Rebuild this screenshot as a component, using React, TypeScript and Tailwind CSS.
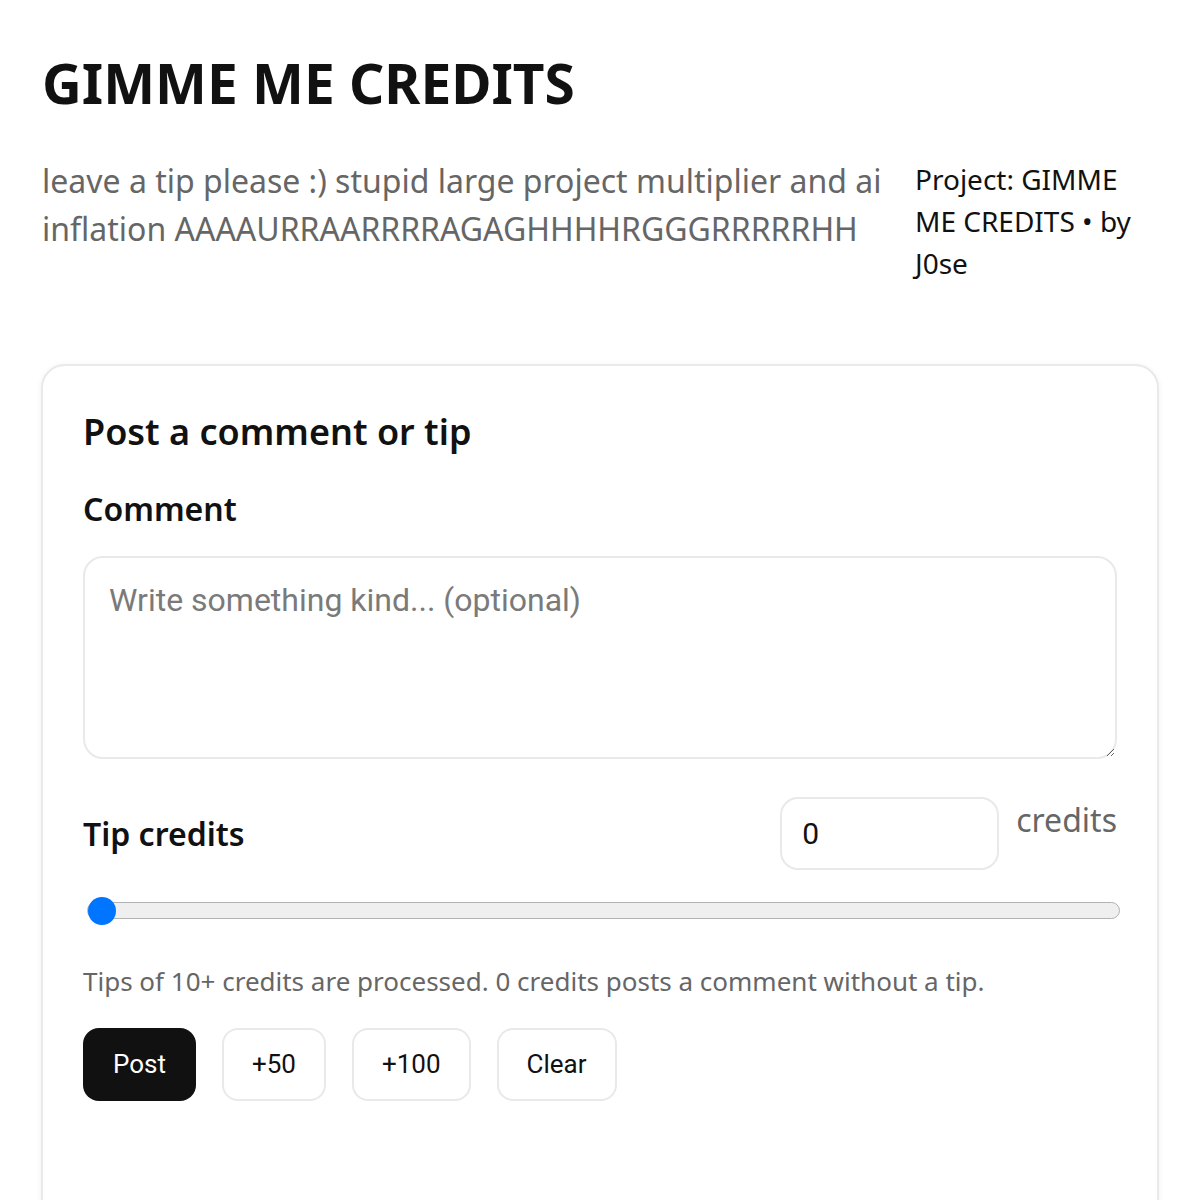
import { useState } from "react";

export default function App() {
  const [tip, setTip] = useState(0);
  const [comment, setComment] = useState("");

  return (
    <div className="min-h-screen bg-white px-[41px] pt-[55px] font-['Noto_Sans',sans-serif] text-[#111]">
      <h1 className="ml-[1px] text-[55px] font-bold leading-none">GIMME ME CREDITS</h1>

      {/* Intro */}
      <div className="mt-[47px] flex items-start justify-between gap-[30px]">
        <p className="ml-[1px] flex-1 text-[32px] leading-[48px] text-[#666]">
          leave a tip please :) stupid large project multiplier and ai inflation AAAAURRAARRRRAGAGHHHHRGGGRRRRRHH
        </p>
        <p className="mt-[1px] w-[244px] text-[28px] leading-[42px]">Project: GIMME ME CREDITS • by J0se</p>
      </div>

      {/* Comment card */}
      <div className="mt-[80px] rounded-[24px] border-2 border-[#e9e9e9] bg-white px-[40px] pt-[43px] shadow-[0_1px_6px_rgba(0,0,0,0.06)]">
        <h2 className="text-[36px] font-semibold leading-[45px]">Post a comment or tip</h2>

        <label className="mt-[35px] block text-[32px] font-semibold leading-[40px]">Comment</label>
        <textarea
          value={comment}
          onChange={(e) => setComment(e.target.value)}
          placeholder="Write something kind... (optional)"
          className="mt-[27px] block h-[203px] w-full rounded-[20px] border-2 border-[#e9e9e9] px-[24px] pt-[20px] font-['Roboto',sans-serif] text-[32px] leading-[45px] text-[#111] outline-none placeholder:text-[#7a7a7a]"
        />

        <div className="mt-[38px] flex items-center justify-between">
          <span className="text-[32px] font-semibold">Tip credits</span>
          <div className="flex items-start gap-[17px]">
            <input
              type="number"
              value={tip}
              onChange={(e) => setTip(Number(e.target.value))}
              className="h-[73px] w-[219px] rounded-[18px] border-2 border-[#e9e9e9] px-[20px] font-['Roboto',sans-serif] text-[30px] text-[#111] outline-none"
            />
            <span className="-mt-[1px] text-[32px] leading-[48px] text-[#666]">credits</span>
          </div>
        </div>

        <input
          type="range"
          min={0}
          max={1000}
          value={tip}
          onChange={(e) => setTip(Number(e.target.value))}
          className="mt-[32px] ml-[4px] block h-[17px] w-[1033px] cursor-pointer appearance-none rounded-full border-[1.5px] border-[#b2b2b2] bg-[#efefef] [&::-webkit-slider-thumb]:h-[28px] [&::-webkit-slider-thumb]:w-[28px] [&::-webkit-slider-thumb]:appearance-none [&::-webkit-slider-thumb]:rounded-full [&::-webkit-slider-thumb]:bg-[#0075ff]"
        />

        <p className="mt-[43px] text-[26px] text-[#666]">
          Tips of 10+ credits are processed. 0 credits posts a comment without a tip.
        </p>

        <div className="mt-[27px] flex gap-[26px] pb-[140px] font-['Roboto',sans-serif] text-[26px]">
          <button className="h-[73px] rounded-[16px] bg-[#111] px-[30px] text-white">Post</button>
          <button onClick={() => setTip(tip + 50)} className="h-[73px] rounded-[16px] border-2 border-[#e9e9e9] px-[28px]">
            +50
          </button>
          <button onClick={() => setTip(tip + 100)} className="h-[73px] rounded-[16px] border-2 border-[#e9e9e9] px-[28px]">
            +100
          </button>
          <button onClick={() => setTip(0)} className="h-[73px] rounded-[16px] border-2 border-[#e9e9e9] px-[28px]">
            Clear
          </button>
        </div>
      </div>
    </div>
  );
}
